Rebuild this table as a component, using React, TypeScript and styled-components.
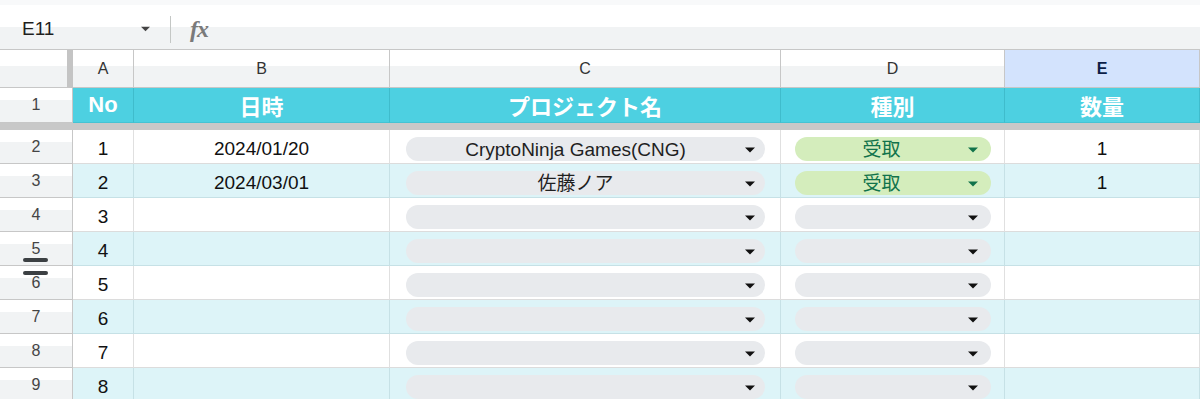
import React from 'react';
import styled, { createGlobalStyle } from 'styled-components';

const Global = createGlobalStyle`
  html, body { margin: 0; padding: 0; background: #fff; overflow: hidden; }
  body { font-family: "Liberation Sans", "Noto Sans CJK JP", Arial, sans-serif; color: #1f1f1f; }
`;

const Page = styled.div`
  width: 1200px;
  height: 399px;
  overflow: hidden;
  position: relative;
`;

const Toolbar = styled.div`
  height: 50px;
  box-sizing: border-box;
  padding-top: 9px;
  border-bottom: 1px solid #c7c7c7;
  background: linear-gradient(#f8f9fa 0 5px, #fff 5px 27px, #f1f3f4 27px);
  display: flex;
  align-items: center;
`;

const NameBox = styled.div`
  width: 128px;
  padding-left: 22px;
  display: flex;
  align-items: center;
  justify-content: space-between;
  font-size: 19px;
  color: #1f1f1f;
`;

const Separator = styled.div`
  width: 1px;
  height: 27px;
  background: #c4c7c5;
  margin-left: 20px;
  margin-right: 19px;
`;

const Fx = styled.span`
  font-family: "Liberation Serif", "DejaVu Serif", serif;
  font-style: italic;
  font-weight: 700;
  font-size: 24px;
  color: #7a7a7a;
  letter-spacing: -1px;
`;

const Sheet = styled.div`
  display: grid;
  grid-template-columns: 73px 61px 256px 391px 224px 1fr;
  grid-template-rows: 38px 35px 7px;
  grid-auto-rows: 34px;
`;

const Corner = styled.div`
  background: linear-gradient(#fff 0 16px, #f1f3f4 16px);
  border-right: 6px solid #c4c4c4;
  border-bottom: 1px solid #c7c7c7;
`;

const ColHead = styled.div<{ $active?: boolean }>`
  display: flex;
  align-items: center;
  justify-content: center;
  font-size: 16px;
  font-weight: ${p => (p.$active ? 700 : 400)};
  color: ${p => (p.$active ? '#0b1e48' : '#333')};
  background: ${p => (p.$active ? '#d3e3fd' : 'linear-gradient(#fff 0 16px, #f1f3f4 16px)')};
  border-right: 1px solid #c7c7c7;
  border-bottom: 1px solid #c7c7c7;
`;

const RowHead = styled.div`
  display: flex;
  align-items: center;
  justify-content: center;
  font-size: 16px;
  color: #444;
  background: linear-gradient(#fff 0 12px, #f1f3f4 12px);
  border-right: 1px solid #c7c7c7;
  border-bottom: 1px solid #c7c7c7;
`;

const HeadCell = styled.div`
  display: flex;
  align-items: center;
  justify-content: center;
  background: #4dd0e1;
  color: #fff;
  font-size: 22px;
  font-weight: 700;
  border-right: 1px solid #3fbccc;
  border-bottom: 1px solid #44c3d3;
`;

const Divider = styled.div`
  grid-column: 1 / -1;
  background: #c8c8c8;
`;

const Cell = styled.div<{ $alt: boolean }>`
  display: flex;
  align-items: flex-end;
  justify-content: center;
  padding-bottom: 3px;
  box-sizing: border-box;
  font-size: 19px;
  line-height: 22px;
  color: #111;
  background: ${p => (p.$alt ? '#ddf4f8' : '#fff')};
  border-right: 1px solid ${p => (p.$alt ? '#c6e1e6' : '#e0e0e0')};
  border-bottom: 1px solid ${p => (p.$alt ? '#c6e1e6' : '#dcdcdc')};
`;

const ChipCell = styled(Cell)<{ $inset: number }>`
  align-items: flex-end;
  justify-content: stretch;
  padding: 0 ${p => p.$inset}px 2px ${p => p.$inset + 1}px;
`;

const Chip = styled.div<{ $green?: boolean; $caretGap: number }>`
  flex: 1;
  height: 24px;
  border-radius: 12px;
  display: flex;
  align-items: center;
  padding: 1px ${p => p.$caretGap}px 0 12px;
  gap: 12px;
  background: ${p => (p.$green ? '#d4edbc' : '#e8eaed')};
  color: ${p => (p.$green ? '#11734b' : '#1f1f1f')};
  box-sizing: border-box;
`;

const ChipText = styled.span`
  flex: 1;
  text-align: center;
  font-size: 19px;
  line-height: 22px;
  white-space: nowrap;
`;

const Handle = styled.div<{ $top: number }>`
  position: absolute;
  left: 23px;
  top: ${p => p.$top}px;
  width: 25px;
  height: 4px;
  border-radius: 2px;
  background: #3c4043;
`;

const Caret = ({ color = '#111', w = 10 }: { color?: string; w?: number }) => (
  <svg width={w} height={6} viewBox="0 0 10 6" style={{ flex: 'none' }}>
    <path d="M0 0.5 L10 0.5 L5 5.5 Z" fill={color} />
  </svg>
);

type Row = { no: string; date: string; proj: string; kind: string; qty: string };

const rows: Row[] = [
  { no: '1', date: '2024/01/20', proj: 'CryptoNinja Games(CNG)', kind: '受取', qty: '1' },
  { no: '2', date: '2024/03/01', proj: '佐藤ノア', kind: '受取', qty: '1' },
  { no: '3', date: '', proj: '', kind: '', qty: '' },
  { no: '4', date: '', proj: '', kind: '', qty: '' },
  { no: '5', date: '', proj: '', kind: '', qty: '' },
  { no: '6', date: '', proj: '', kind: '', qty: '' },
  { no: '7', date: '', proj: '', kind: '', qty: '' },
  { no: '8', date: '', proj: '', kind: '', qty: '' },
];

export default function App() {
  return (
    <Page>
      <Global />
      <Toolbar>
        <NameBox>
          <span>E11</span>
          <Caret color="#444" w={9} />
        </NameBox>
        <Separator />
        <Fx>fx</Fx>
      </Toolbar>
      <Sheet>
        <Corner />
        <ColHead>A</ColHead>
        <ColHead>B</ColHead>
        <ColHead>C</ColHead>
        <ColHead>D</ColHead>
        <ColHead $active>E</ColHead>

        <RowHead>1</RowHead>
        <HeadCell>No</HeadCell>
        <HeadCell>日時</HeadCell>
        <HeadCell>プロジェクト名</HeadCell>
        <HeadCell>種別</HeadCell>
        <HeadCell>数量</HeadCell>

        <Divider />

        {rows.map((r, i) => {
          const alt = i % 2 === 1;
          return (
            <React.Fragment key={i}>
              <RowHead>{i + 2}</RowHead>
              <Cell $alt={alt}>{r.no}</Cell>
              <Cell $alt={alt}>{r.date}</Cell>
              <ChipCell $alt={alt} $inset={15}>
                <Chip $caretGap={10}>
                  <ChipText>{r.proj}</ChipText>
                  <Caret />
                </Chip>
              </ChipCell>
              <ChipCell $alt={alt} $inset={13}>
                <Chip $green={!!r.kind} $caretGap={13}>
                  <ChipText>{r.kind}</ChipText>
                  <Caret color={r.kind ? '#11734b' : '#111'} />
                </Chip>
              </ChipCell>
              <Cell $alt={alt}>{r.qty}</Cell>
            </React.Fragment>
          );
        })}
      </Sheet>
      <Handle $top={258} />
      <Handle $top={271} />
    </Page>
  );
}
